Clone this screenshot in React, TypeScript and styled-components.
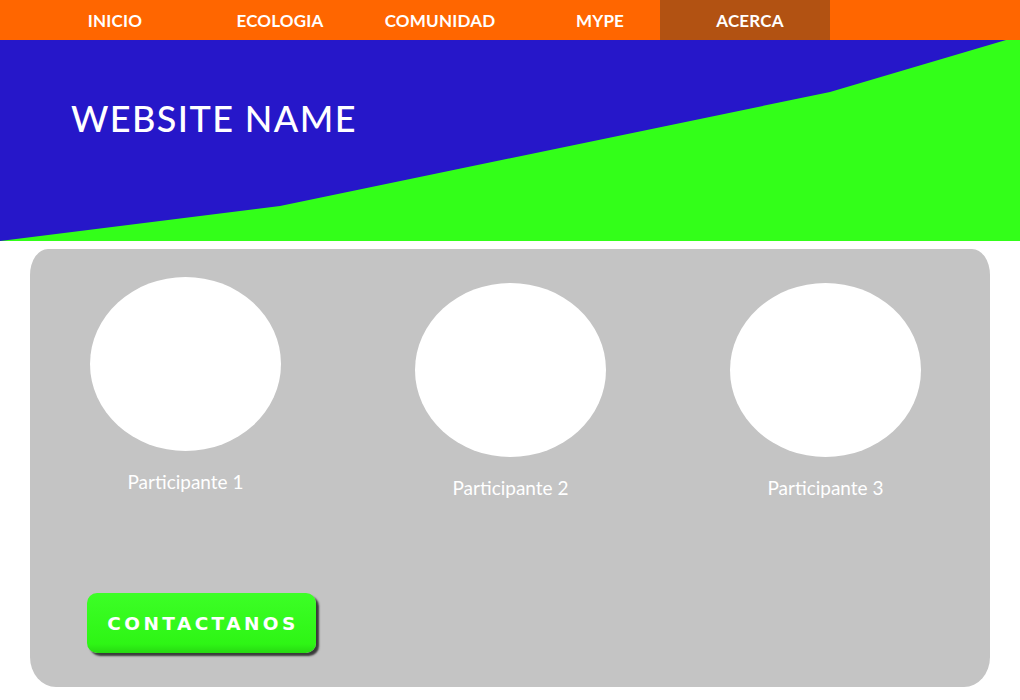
import React from 'react';
import styled, { createGlobalStyle } from 'styled-components';

const GlobalStyle = createGlobalStyle`
  html, body {
    margin: 0;
    padding: 0;
    background: #fff;
  }
  body {
    font-family: 'Lato', 'Open Sans', sans-serif;
    width: 1020px;
  }
`;

const NavBar = styled.nav`
  display: flex;
  height: 40px;
  background-color: #ff6600;
  padding-left: 40px;
`;

const NavItem = styled.a<{ $width: number; $active?: boolean; $shift?: number }>`
  display: flex;
  align-items: center;
  justify-content: center;
  width: ${(p) => p.$width}px;
  padding-left: ${(p) => p.$shift || 0}px;
  box-sizing: border-box;
  height: 40px;
  color: #fff;
  font-size: 17px;
  font-weight: 700;
  letter-spacing: 0.2px;
  text-decoration: none;
  background-color: ${(p) => (p.$active ? '#b25212' : 'transparent')};
`;

const Hero = styled.header`
  position: relative;
  height: 201px;
  background-color: #2617c9;
  overflow: hidden;
`;

const Wave = styled.svg`
  position: absolute;
  left: 0;
  top: 0;
`;

const SiteTitle = styled.h1`
  position: relative;
  margin: 0;
  padding: 58px 0 0 71px;
  color: #fff;
  font-family: 'Lato', sans-serif;
  font-size: 36px;
  font-weight: 500;
  letter-spacing: 1.4px;
  line-height: 40px;
`;

const Panel = styled.section`
  margin: 8px 30px 0;
  height: 438px;
  background-color: #c4c4c4;
  border-radius: 18px 18px 26px 26px / 26px 26px 30px 30px;
  padding: 28px 0 0 60px;
  box-sizing: border-box;
`;

const People = styled.div`
  display: flex;
  align-items: flex-start;
`;

const Person = styled.div<{ $gap: number; $drop: number }>`
  display: flex;
  flex-direction: column;
  align-items: center;
  width: 191px;
  margin-left: ${(p) => p.$gap}px;
  margin-top: ${(p) => p.$drop}px;
`;

const Avatar = styled.div`
  width: 191px;
  height: 174px;
  border-radius: 50%;
  background-color: #fff;
`;

const Name = styled.p`
  margin: 20px 0 0;
  color: #fff;
  font-family: 'Lato', sans-serif;
  font-size: 19px;
  line-height: 22px;
`;

const ContactButton = styled.button`
  display: block;
  margin: 94px 0 0 -3px;
  width: 229px;
  height: 60px;
  padding: 0 0 0 3px;
  border: none;
  border-radius: 10px;
  background: linear-gradient(#3cff26, #2ef515 85%, #27d912);
  box-shadow: 3px 3px 2px #3a3a3a;
  color: #fff;
  font-family: 'DejaVu Sans', 'Liberation Sans', sans-serif;
  font-size: 18.5px;
  font-weight: 700;
  letter-spacing: 3.4px;
  cursor: pointer;
`;

const navLinks = [
  { label: 'INICIO', width: 150 },
  { label: 'ECOLOGIA', width: 180 },
  { label: 'COMUNIDAD', width: 140 },
  { label: 'MYPE', width: 150, shift: 30 },
  { label: 'ACERCA', width: 170, active: true, shift: 10 },
];

const people = [
  { name: 'Participante 1', gap: 0, drop: 0 },
  { name: 'Participante 2', gap: 134, drop: 6 },
  { name: 'Participante 3', gap: 124, drop: 6 },
];

const App = () => {
  return (
    <>
      <GlobalStyle />
      <NavBar>
        {navLinks.map((link) => (
          <NavItem
            key={link.label}
            href="#"
            $width={link.width}
            $active={link.active}
            $shift={link.shift}
          >
            {link.label}
          </NavItem>
        ))}
      </NavBar>
      <Hero>
        <Wave width="1020" height="201" viewBox="0 0 1020 201">
          <polygon points="0,201 280,166 830,52 1006,0 1020,0 1020,201" fill="#33ff19" />
        </Wave>
        <SiteTitle>WEBSITE NAME</SiteTitle>
      </Hero>
      <Panel>
        <People>
          {people.map((p) => (
            <Person key={p.name} $gap={p.gap} $drop={p.drop}>
              <Avatar />
              <Name>{p.name}</Name>
            </Person>
          ))}
        </People>
        <ContactButton>CONTACTANOS</ContactButton>
      </Panel>
    </>
  );
};

export default App;
